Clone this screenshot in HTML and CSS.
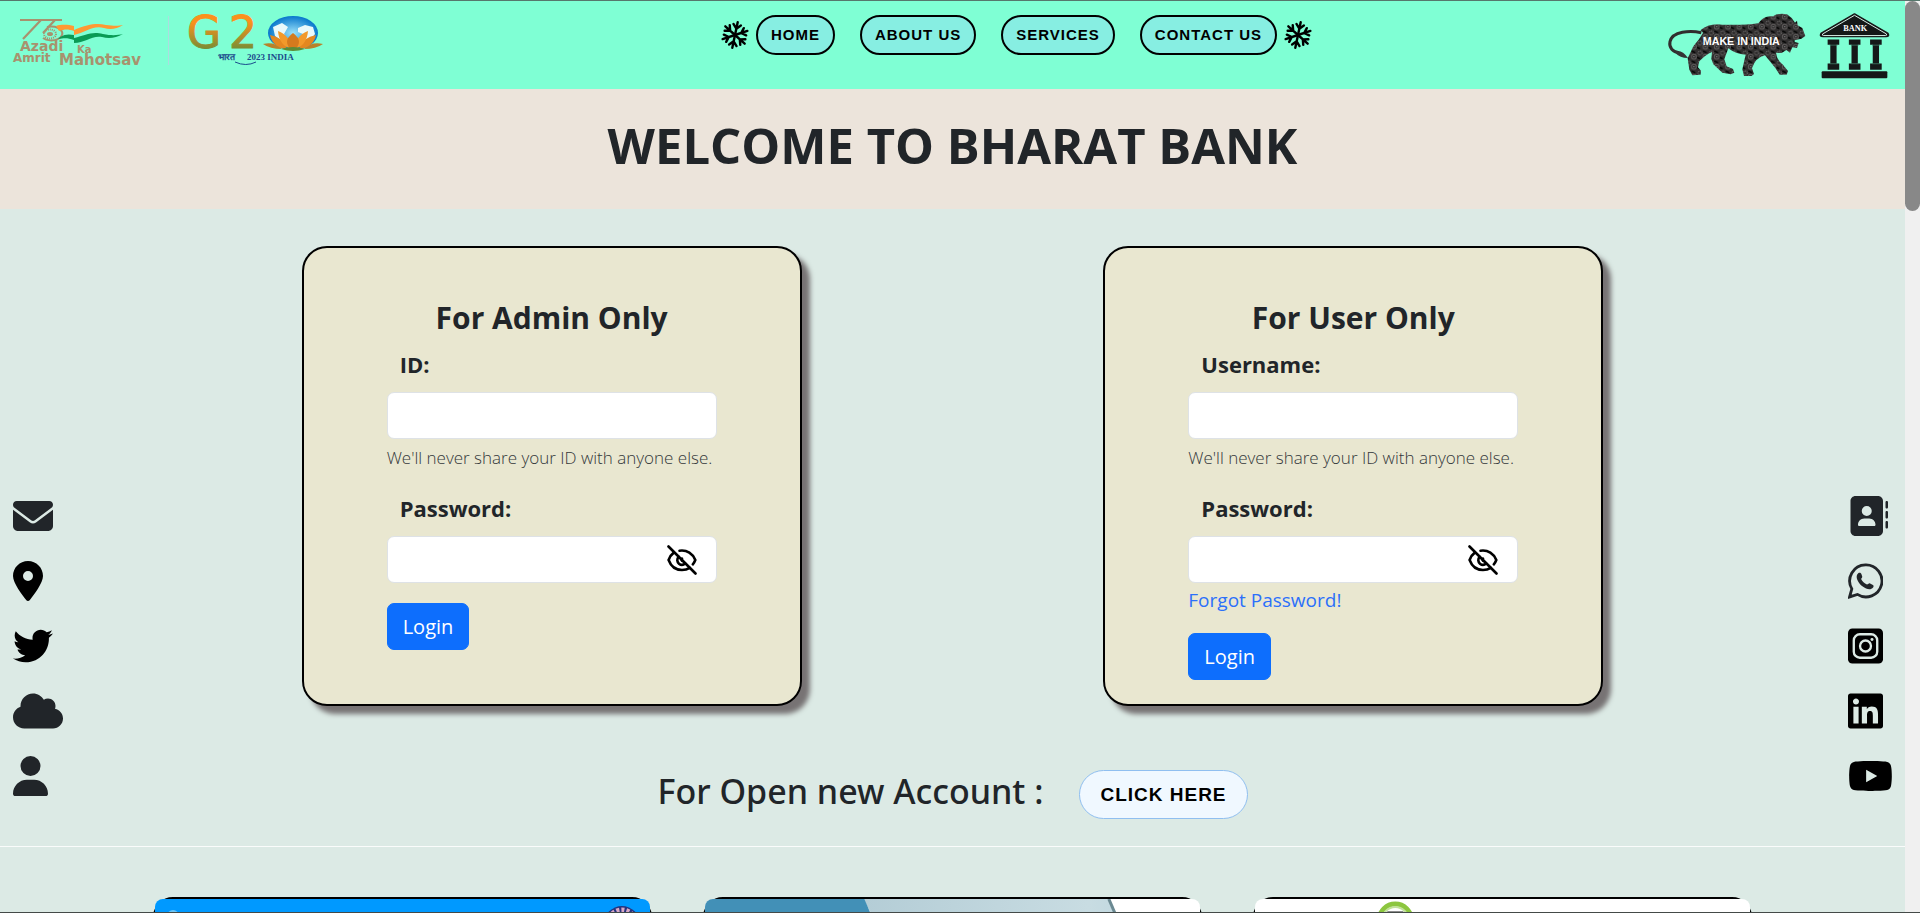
FILE: index.html
```html
<!DOCTYPE html>
<html lang="en">
<head>
<meta charset="utf-8">
<title>Bharat Bank</title>
<link rel="stylesheet" href="styles.css">
</head>
<body>
<svg class="defs" aria-hidden="true">
  <symbol id="flake" viewBox="-15 -15 30 30">
    <g fill="none" stroke="#000" stroke-width="2.4" stroke-linecap="round" transform="rotate(12)">
      <g id="arm"><path d="M0 0V-13M0 -6.500L-3.800 -10.500M0 -6.500L3.800 -10.500"/></g>
      <use href="#arm" transform="rotate(60)"/><use href="#arm" transform="rotate(120)"/><use href="#arm" transform="rotate(180)"/><use href="#arm" transform="rotate(240)"/><use href="#arm" transform="rotate(300)"/>
    </g>
  </symbol>
  <symbol id="eye-off" viewBox="0 0 30 30">
    <g fill="none" stroke="#000" stroke-width="2.6" stroke-linecap="round">
      <path d="M1.5 1.5L28.500 28.500"/>
      <path d="M12.500 5.700C20 4.500 26 9 28.300 15C27.700 16.700 26.900 18 25.800 19.300"/>
      <path d="M6.800 7.600C4.200 9.500 2.600 12 1.600 15C4 21.500 9 25 15 25C18 25 20.600 24.200 22.800 22.800"/>
      <path d="M11.600 11.800C9.600 14 10 17 12 18.700C14 20.300 16.500 20 18.200 18.500"/>
      <path d="M15 13.500C14.200 14.600 14.600 15.700 15.800 16"/>
    </g>
  </symbol>
</svg>
<div class="window">
<div class="page">
  <header class="topbar">
    <div class="logos">
      <svg class="azadi" viewBox="0 0 140 50" role="img" aria-label="Azadi Ka Amrit Mahotsav">
        <path d="M8 3H50M29 3L11 22M43 3L31 16" fill="none" stroke="#a8926e" stroke-width="2.200"/>
        <g fill="none" stroke="#a8926e"><path d="M35 10a11 7 0 1 1 -4 11" stroke-width="2"/><ellipse cx="38" cy="17" rx="6" ry="4.500" stroke-width="2" stroke-dasharray="1 1"/></g>
        <ellipse cx="38" cy="17" rx="3" ry="2" fill="#a8926e"/>
        <path d="M44 9C50 7 57 8 62 9V14C56 12 53 12 47 14Z" fill="#ff9933"/>
        <path d="M48 20C53 17 57 17 62 18V23C56 21 53 21 46 22Z" fill="#0a9b55"/>
        <path d="M62 13C76 7 85 6 94 8C102 9 107 9 111 8C105 12 98 13 92 11C80 8 73 16 62 18Z" fill="#ff9933"/>
        <path d="M62 21C74 18 80 14 91 17C101 19 106 18 111 17C104 21 97 22 90 20C80 18 73 26 62 26Z" fill="#0a9b55"/>
        <g class="azadi-text"><text x="8" y="34" font-size="14">Azadi</text><text x="65" y="36" font-size="10">Ka</text><text x="1" y="45" font-size="12">Amrit</text><text x="47" y="48" font-size="15">Mahotsav</text></g>
      </svg>
      <span class="logo-rule"></span>
      <svg class="g20" viewBox="0 -12 144 64" role="img" aria-label="G20 India 2023">
        <defs>
          <linearGradient id="gg" x1="0" y1="0" x2="0" y2="1"><stop offset=".3" stop-color="#fb901c"/><stop offset="1" stop-color="#4a8c3c"/></linearGradient>
          <radialGradient id="globe"><stop offset="0" stop-color="#9be2fa"/><stop offset="1" stop-color="#0877cc"/></radialGradient>
        </defs>
        <g fill="url(#gg)" class="g20-text"><text x="5" y="33">G</text><text x="47" y="33">2</text></g>
        <ellipse cx="111" cy="18" rx="25" ry="17" fill="url(#globe)"/>
        <path d="M91 12l9-4 6 4-4 7 3 5-5 2-7-5zM116 13l7-3 8 2 2 7-6 8-4-2-2-6-5-2z" fill="#eaf9fb"/>
        <path d="M81 29Q92 26 100 34Q88 34 81 29ZM141 29Q130 26 122 34Q134 34 141 29Z" fill="#b8822a"/>
        <path d="M88 20Q101 22 105 34Q91 33 88 20ZM134 20Q121 22 117 34Q131 33 134 20Z" fill="#e48720"/>
        <path d="M96 16Q108 20 109 34Q97 30 96 16ZM126 16Q114 20 113 34Q125 30 126 16Z" fill="#f2992b"/>
        <path d="M111 18Q123 27 111 36Q99 27 111 18Z" fill="#d47a1e"/>
        <path d="M99 34Q111 30 123 34Q111 38 99 34Z" fill="#5c8c35"/>
        <path d="M53 47Q64 52 74 47" stroke="#1c4b8c" fill="none"/>
        <g fill="#1c4b8c" class="g20-sub"><text x="36" y="45">भारत</text><text x="65" y="45">2023 INDIA</text></g>
      </svg>
    </div>
    <nav class="nav">
      <svg class="flake"><use href="#flake"/></svg>
      <div class="nav-links">
        <a href="#home">HOME</a>
        <a href="#about">ABOUT US</a>
        <a href="#services">SERVICES</a>
        <a href="#contact">CONTACT US</a>
      </div>
      <svg class="flake"><use href="#flake"/></svg>
    </nav>
    <div class="marks">
      <svg class="lion" viewBox="80 36 420 195" role="img" aria-label="Make in India">
        <defs><pattern id="gears" width="34" height="30" patternUnits="userSpaceOnUse"><rect width="34" height="30" fill="#302e2e"/><circle cx="9" cy="9" r="6" fill="none" stroke="#696666" stroke-width="3" stroke-dasharray="3 2"/><circle cx="25" cy="20" r="7" fill="none" stroke="#5c5959" stroke-width="3"/><circle cx="25" cy="20" r="2" fill="#888"/><path d="M0 22l9 4M18 3l11 5" stroke="#090909" stroke-width="5"/></pattern></defs>
        <path d="M183 98C150 91 96 93 89 125C85 143 98 156 116 158" fill="none" stroke="#302e2e" stroke-width="9"/>
        <path d="M106 154Q125 148 143 174Q118 174 106 160Z" fill="#333"/>
        <path fill="url(#gears)" d="M180 91Q206 68 247 74Q309 76 354 70Q370 45 398 49Q412 38 440 43Q455 52 464 68L470 62L472 76L486 84L495 108L483 116L463 121V126L475 129L470 144L456 142L449 158L438 150L424 159L407 158Q409 180 428 194L443 213L439 224H418L405 204L374 166Q345 173 335 205L341 222L334 228H311L306 208L316 164Q285 162 264 145L252 178L259 199L278 207L282 218L271 223L246 218L219 193L213 177L215 156Q196 164 177 184L173 202L182 212L181 224L156 226L147 209L142 175L159 139L177 116L188 98Z"/>
        <text x="303" y="136" text-anchor="middle" class="lion-text">MAKE IN INDIA</text>
      </svg>
      <svg class="bank" viewBox="538 34 214 202" role="img" aria-label="Bank">
        <path d="M645 40L746 99Q751 108 740 108H550Q539 108 544 99Z" fill="#151818" stroke="#151818" stroke-width="5" stroke-linejoin="round"/>
        <path d="M645 44L741 100Q744 105 738 105H552Q546 105 549 100Z" fill="none" stroke="#d8eee5" stroke-width="3"/>
        <text x="647" y="91" text-anchor="middle" class="bank-text">BANK</text>
        <g fill="#151818"><rect x="546" y="213" width="198" height="21" rx="3"/>
        <path d="M564 117h35v16h-8v56h8v19h-35v-19h8v-56h-8zM628 117h35v16h-8v56h8v19h-35v-19h8v-56h-8zM692 117h35v16h-8v56h8v19h-35v-19h8v-56h-8z"/></g>
        <path d="M570 134h24M570 190h24M634 134h24M634 190h24M698 134h24M698 190h24" stroke="#4b8c75" stroke-width="2"/>
      </svg>
    </div>
  </header>

  <section class="banner"><h1>WELCOME TO BHARAT BANK</h1></section>

  <main>
    <section class="logins">
      <form class="card">
        <div class="fields">
          <h2>For Admin Only</h2>
          <label for="admin-id">ID:</label>
          <input id="admin-id" type="text">
          <p class="hint">We'll never share your ID with anyone else.</p>
          <label for="admin-pass">Password:</label>
          <div class="secret">
            <input id="admin-pass" type="password">
            <button type="button" class="eye" aria-label="Show password"><svg><use href="#eye-off"/></svg></button>
          </div>
          <button type="submit" class="login">Login</button>
        </div>
      </form>
      <form class="card">
        <div class="fields">
          <h2>For User Only</h2>
          <label for="user-name">Username:</label>
          <input id="user-name" type="text">
          <p class="hint">We'll never share your ID with anyone else.</p>
          <label for="user-pass">Password:</label>
          <div class="secret">
            <input id="user-pass" type="password">
            <button type="button" class="eye" aria-label="Show password"><svg><use href="#eye-off"/></svg></button>
          </div>
          <a class="forgot" href="#forgot">Forgot Password!</a>
          <button type="submit" class="login">Login</button>
        </div>
      </form>
    </section>

    <section class="open-account">
      <h2>For Open new Account :</h2>
      <a class="click-here" href="#open">CLICK HERE</a>
    </section>

    <section class="offers">
      <article class="offer">
        <svg class="offer-pic blue" viewBox="0 0 494 300"><circle cx="466" cy="25" r="18" fill="#26337f"/><circle cx="466" cy="25" r="14" fill="none" stroke="#d9a9c6" stroke-width="5" stroke-dasharray="3 2"/><circle cx="466" cy="25" r="10" fill="#4b2a66"/><circle cx="18" cy="17" r="5" fill="none" stroke="#6cc5f6" stroke-width="2"/></svg>
      </article>
      <article class="offer">
        <svg class="offer-pic white" viewBox="0 0 494 300"><defs><linearGradient id="sky"><stop offset="0" stop-color="#b4cdd6"/><stop offset=".6" stop-color="#c8dce2"/><stop offset="1" stop-color="#a9cbd7"/></linearGradient></defs><path d="M158 0H403L533 300H320Z" fill="url(#sky)"/><path d="M0 0H159L289 300H0Z" fill="#4290b7"/><path d="M403 0L533 300" stroke="#6b8992" stroke-width="3"/></svg>
      </article>
      <article class="offer">
        <svg class="offer-pic white" viewBox="0 0 494 300"><circle cx="140" cy="21" r="16" fill="none" stroke="#8cc63f" stroke-width="5"/><circle cx="140" cy="21" r="13" fill="#fff" stroke="#c2e29a" stroke-width="2"/><rect x="132" y="12" width="16" height="12" fill="#8a8a8a"/></svg>
      </article>
    </section>
  </main>

  <aside class="rail rail-left">
    <a href="#mail" aria-label="Mail"><svg viewBox="0 0 512 512"><path d="M48 64C21.500 64 0 85.500 0 112c0 15.100 7.100 29.300 19.200 38.400L236.800 313.600c11.400 8.500 27 8.500 38.400 0L492.800 150.400c12.100-9.100 19.200-23.300 19.200-38.400c0-26.500-21.500-48-48-48H48zM0 176V384c0 35.300 28.700 64 64 64H448c35.300 0 64-28.700 64-64V176L294.400 339.200c-22.800 17.100-54 17.100-76.800 0L0 176z"/></svg></a>
    <a class="ink" href="#map" aria-label="Location"><svg viewBox="0 0 384 512"><path d="M215.700 499.200C267 435 384 279.400 384 192C384 86 298 0 192 0S0 86 0 192c0 87.400 117 243 168.300 307.200c12.300 15.300 35.100 15.300 47.400 0zM192 128a64 64 0 1 1 0 128 64 64 0 1 1 0-128z"/></svg></a>
    <a class="ink" href="#twitter" aria-label="Twitter"><svg viewBox="0 0 512 512"><path d="M459.370 151.716c.325 4.548.325 9.097.325 13.645 0 138.720-105.583 298.558-298.558 298.558-59.452 0-114.680-17.219-161.137-47.106 8.447.974 16.568 1.299 25.340 1.299 49.055 0 94.213-16.568 130.274-44.832-46.132-.975-84.792-31.188-98.112-72.772 6.498.974 12.995 1.624 19.818 1.624 9.421 0 18.843-1.300 27.614-3.573-48.081-9.747-84.143-51.980-84.143-102.985v-1.299c13.969 7.797 30.214 12.670 47.431 13.319-28.264-18.843-46.781-51.005-46.781-87.391 0-19.492 5.197-37.360 14.294-52.954 51.655 63.675 129.300 105.258 216.365 109.807-1.624-7.797-2.599-15.918-2.599-24.040 0-57.828 46.782-104.934 104.934-104.934 30.213 0 57.502 12.670 76.670 33.137 23.715-4.548 46.456-13.320 66.599-25.340-7.798 24.366-24.366 44.833-46.132 57.827 21.117-2.273 41.584-8.122 60.426-16.243-14.292 20.791-32.161 39.308-52.628 54.253z"/></svg></a>
    <a href="#cloud" aria-label="Cloud"><svg viewBox="0 0 640 512"><path d="M0 336c0 79.500 64.500 144 144 144H512c70.700 0 128-57.300 128-128c0-61.900-44-113.600-102.400-125.400c4.100-10.700 6.400-22.400 6.400-34.600c0-53-43-96-96-96c-19.700 0-38.100 6-53.300 16.200C367 64.200 315.300 32 256 32C167.600 32 96 103.600 96 192c0 2.700 .1 5.400 .2 8.100C40.200 219.800 0 273.200 0 336z"/></svg></a>
    <a href="#profile" aria-label="Profile"><svg viewBox="0 0 448 512"><path d="M224 256A128 128 0 1 0 224 0a128 128 0 1 0 0 256zm-45.700 48C79.800 304 0 383.800 0 482.300C0 498.700 13.300 512 29.700 512H418.300c16.400 0 29.700-13.300 29.700-29.700C448 383.800 368.200 304 269.700 304H178.300z"/></svg></a>
  </aside>
  <aside class="rail rail-right">
    <a href="#contacts" aria-label="Contacts"><svg viewBox="0 0 512 512"><path d="M96 0C60.700 0 32 28.700 32 64V448c0 35.300 28.700 64 64 64H384c35.300 0 64-28.700 64-64V64c0-35.300-28.700-64-64-64H96zM208 288h64c44.200 0 80 35.800 80 80c0 8.800-7.200 16-16 16H144c-8.800 0-16-7.200-16-16c0-44.200 35.800-80 80-80zm-32-96a64 64 0 1 1 128 0 64 64 0 1 1 -128 0zM512 80c0-8.800-7.200-16-16-16s-16 7.200-16 16v64c0 8.800 7.200 16 16 16s16-7.200 16-16V80zM496 192c-8.800 0-16 7.200-16 16v64c0 8.800 7.200 16 16 16s16-7.200 16-16V208c0-8.800-7.200-16-16-16zm16 144c0-8.800-7.200-16-16-16s-16 7.200-16 16v64c0 8.800 7.200 16 16 16s16-7.200 16-16V336z"/></svg></a>
    <a href="#whatsapp" aria-label="WhatsApp"><svg viewBox="0 0 448 512"><path d="M224 50a205 205 0 1 1-104 378L20 460L49 357A205 205 0 0 1 224 50Z" fill="none" stroke="#212529" stroke-width="36"/><path d="M134 153c14-8 31-3 36 10l12 34c4 12-14 25-14 34c15 32 41 56 75 71c11 0 22-18 34-16l42 20c13 8 9 24 2 33c-21 28-57 27-90 12c-60-28-104-73-119-134c-4-26 4-52 22-64z"/></svg></a>
    <a class="ink" href="#instagram" aria-label="Instagram"><svg viewBox="0 0 448 512"><path fill-rule="evenodd" d="M56 32H392a56 56 0 0 1 56 56V424a56 56 0 0 1-56 56H56a56 56 0 0 1-56-56V88A56 56 0 0 1 56 32Z"/><g fill="none" stroke="#dceae5" stroke-width="30"><rect x="74" y="106" width="300" height="300" rx="78"/><circle cx="224" cy="256" r="70"/></g><circle cx="307" cy="174" r="19" fill="#dceae5"/></svg></a>
    <a class="ink" href="#linkedin" aria-label="LinkedIn"><svg viewBox="0 0 448 512"><path d="M416 32H31.900C14.300 32 0 46.500 0 64.300v383.400C0 465.500 14.300 480 31.900 480H416c17.600 0 32-14.500 32-32.300V64.300c0-17.800-14.400-32.300-32-32.300zM135.400 416H69V202.200h66.500V416zm-33.200-243c-21.300 0-38.500-17.300-38.500-38.500S80.900 96 102.200 96c21.200 0 38.500 17.300 38.500 38.500 0 21.300-17.200 38.500-38.500 38.500zm282.100 243h-66.400V312c0-24.800-.5-56.700-34.500-56.700-34.600 0-39.900 27-39.900 54.900V416h-66.400V202.200h63.700v29.200h.9c8.900-16.800 30.600-34.500 62.900-34.500 67.200 0 79.700 44.300 79.700 101.900V416z"/></svg></a>
    <a class="ink" href="#youtube" aria-label="YouTube"><svg viewBox="0 0 576 512"><path d="M549.655 124.083c-6.281-23.650-24.787-42.276-48.284-48.597C458.781 64 288 64 288 64S117.220 64 74.629 75.486c-23.497 6.322-42.003 24.947-48.284 48.597-11.412 42.867-11.412 132.305-11.412 132.305s0 89.438 11.412 132.305c6.281 23.650 24.787 41.500 48.284 47.821C117.220 448 288 448 288 448s170.780 0 213.371-11.486c23.497-6.321 42.003-24.171 48.284-47.821 11.412-42.867 11.412-132.305 11.412-132.305s0-89.438-11.412-132.305zm-317.510 213.508V175.185l142.739 81.205-142.739 81.201z"/></svg></a>
  </aside>
</div>
<div class="scroll-track"><div class="scroll-thumb"></div></div>
</div>
</body>
</html>
```
FILE: styles.css
```css
* { box-sizing: border-box; }
body {
  margin: 0;
  color: #212529;
  font-family: "Open Sans", "Noto Sans", sans-serif;
}
h1, h2, p { margin: 0; }
a { color: inherit; text-decoration: none; }
.defs { position: absolute; width: 0; height: 0; }

.window {
  display: grid;
  grid-template-columns: 1fr 15px;
  height: 100vh;
  overflow: hidden;
  border-top: 1px solid #56776c;
  border-bottom: 1px solid #444a48;
}
.page {
  position: relative;
  min-width: 0;
  overflow: hidden;
  background: #dceae5;
}
.scroll-track { background: #f0f0f0; }
.scroll-thumb { height: 23vh; border-radius: 8px; background: #888; }

.topbar {
  display: flex;
  justify-content: space-between;
  align-items: flex-start;
  height: 88px;
  padding: 0 15px 0 12px;
  background: #7fffd4;
}
.logos { display: flex; align-items: flex-end; padding: 2px 40px 0 0; }
.azadi { width: 140px; height: 50px; }
.azadi-text { fill: #a8926e; font-family: "DejaVu Sans", sans-serif; font-weight: 700; }
.logo-rule { width: 1px; height: 49px; margin: 0 13px 2px 16px; background: #addce0; }
.g20 { width: 144px; height: 64px; }
.g20-text { font: 44px "DejaVu Sans", sans-serif; stroke: url(#gg); stroke-width: 1px; }
.g20-sub { font: bold 9px "Liberation Serif", serif; }

.nav { display: flex; align-items: center; gap: 6px; padding-top: 14px; }
.nav-links { display: flex; gap: 25px; }
.nav-links a {
  height: 40px;
  padding: 0 13px;
  border: 2px solid #000;
  border-radius: 20px;
  background: #87eee2;
  color: #000;
  font: bold 15px/36px "Liberation Sans", Arial, sans-serif;
  letter-spacing: 1px;
}
.flake { width: 30px; height: 30px; }
.marks { display: flex; gap: 12px; padding-top: 11px; }
.lion { width: 140px; height: 65px; }
.lion-text { fill: #fff; font: bold 32px "Liberation Sans", sans-serif; }
.bank { width: 71px; height: 67px; }
.bank-text { fill: #fff; font: bold 25px "Liberation Serif", serif; }

.banner {
  height: 120px;
  padding-top: 21px;
  background: #ece4db;
  text-align: center;
}
.banner h1 { font-size: 49px; line-height: 70px; font-weight: 700; }

.logins { display: flex; justify-content: space-evenly; padding-top: 37px; }
.card {
  width: 500px;
  height: 460px;
  padding: 52px 0;
  border: 2px solid #000;
  border-radius: 25px;
  background: #e9e7d0;
  box-shadow: 8px 8px 5px #777374;
}
.fields { display: flex; flex-direction: column; width: 330px; margin: 0 auto; }
.fields h2 { margin-bottom: 15px; font-size: 30px; line-height: 36px; text-align: center; }
.fields label { margin: 0 13px 15px; font-size: 22px; line-height: 26px; font-weight: 700; }
.fields input {
  display: block;
  width: 100%;
  height: 47px;
  padding: 6px 12px;
  border: 1px solid #dee2e6;
  border-radius: 7px;
  background: #fff;
  font: inherit;
}
.hint { margin: 7px 0 25px; font-size: 17px; line-height: 24px; font-weight: 300; white-space: nowrap; color: #33373a; }
.secret { position: relative; }
.eye {
  position: absolute;
  top: 9px;
  right: 20px;
  width: 30px;
  height: 30px;
  padding: 0;
  border: 0;
  background: none;
}
.eye svg { display: block; width: 30px; height: 30px; }
.forgot { margin-top: 4px; align-self: flex-start; color: #2c70fa; font-size: 19px; line-height: 26px; }
.login {
  align-self: flex-start;
  height: 47px;
  margin-top: 20px;
  padding: 0 15px;
  border: 1px solid #0d6efd;
  border-radius: 7px;
  background: #0d6efd;
  color: #fff;
  font: 20px/30px "Open Sans", "Noto Sans", sans-serif;
}

.open-account {
  display: flex;
  justify-content: center;
  align-items: flex-start;
  gap: 36px;
  margin-top: 64px;
  padding-bottom: 27px;
  border-bottom: 1px solid #fafcfb;
}
.open-account h2 { font-family: "Noto Sans", "Open Sans", sans-serif; font-size: 34px; line-height: 42px; font-weight: 500; }
.click-here {
  height: 49px;
  padding: 0 20px;
  border: 1px solid #90bff0;
  border-radius: 25px;
  background: #f0f8ff;
  color: #000;
  font: bold 19px/47px "Liberation Sans", Arial, sans-serif;
  letter-spacing: 1px;
}
.offers {
  display: grid;
  grid-template-columns: repeat(3, 1fr);
  gap: 51px;
  padding: 50px 153px 0;
}
.offer { border: 2px solid #000; border-radius: 20px; background: #000; }
.offer-pic { display: block; width: 100%; border-radius: 8px; }
.blue { background: #0099ff; }
.white { background: #fff; }

.rail {
  position: absolute;
  top: 495px;
  display: grid;
  gap: 25px;
}
.rail-left { left: 13px; }
.rail-right { right: 14px; width: 43px; }
.rail a { display: block; height: 40px; }
.rail svg { display: block; height: 40px; fill: #212529; }
.rail .ink svg { fill: #000; }
```
